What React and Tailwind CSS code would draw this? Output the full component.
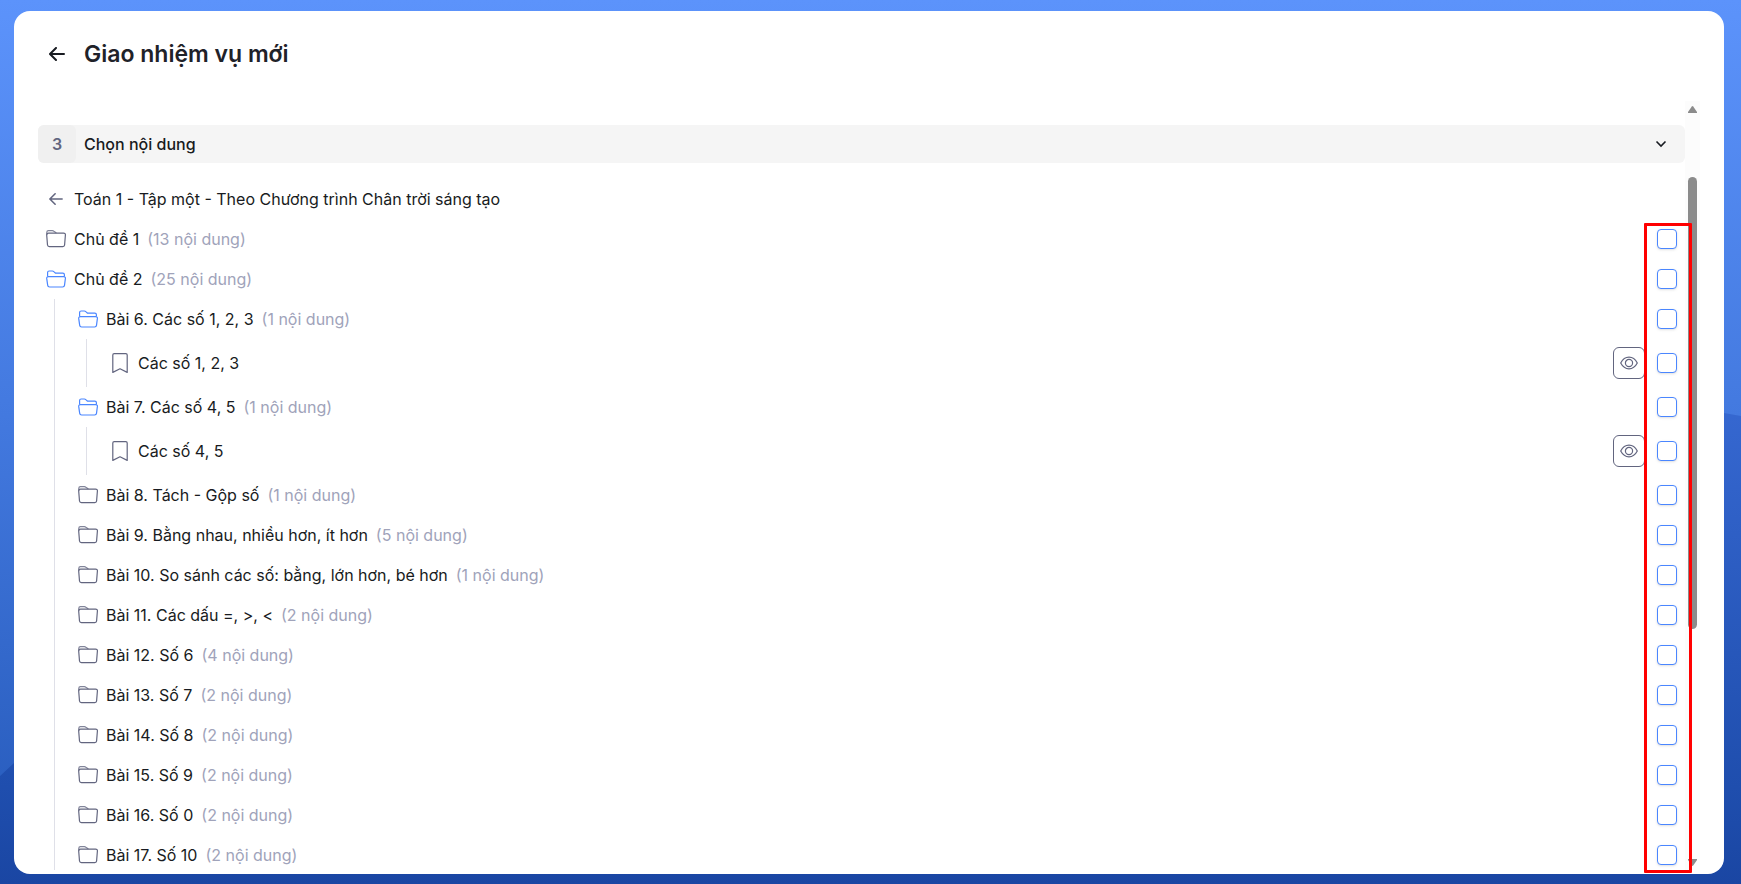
import React, { useState } from 'react';

const treeData = [
    { id: 'cd1', type: 'folder', title: 'Chủ đề 1', count: 13 },
    {
        id: 'cd2',
        type: 'folder',
        title: 'Chủ đề 2',
        count: 25,
        children: [
            {
                id: 'b6',
                type: 'folder',
                title: 'Bài 6. Các số 1, 2, 3',
                count: 1,
                children: [{ id: 'b6-1', type: 'lesson', title: 'Các số 1, 2, 3' }],
            },
            {
                id: 'b7',
                type: 'folder',
                title: 'Bài 7. Các số 4, 5',
                count: 1,
                children: [{ id: 'b7-1', type: 'lesson', title: 'Các số 4, 5' }],
            },
            { id: 'b8', type: 'folder', title: 'Bài 8. Tách - Gộp số', count: 1 },
            { id: 'b9', type: 'folder', title: 'Bài 9. Bằng nhau, nhiều hơn, ít hơn', count: 5 },
            { id: 'b10', type: 'folder', title: 'Bài 10. So sánh các số: bằng, lớn hơn, bé hơn', count: 1 },
            { id: 'b11', type: 'folder', title: 'Bài 11. Các dấu =, >, <', count: 2 },
            { id: 'b12', type: 'folder', title: 'Bài 12. Số 6', count: 4 },
            { id: 'b13', type: 'folder', title: 'Bài 13. Số 7', count: 2 },
            { id: 'b14', type: 'folder', title: 'Bài 14. Số 8', count: 2 },
            { id: 'b15', type: 'folder', title: 'Bài 15. Số 9', count: 2 },
            { id: 'b16', type: 'folder', title: 'Bài 16. Số 0', count: 2 },
            { id: 'b17', type: 'folder', title: 'Bài 17. Số 10', count: 2 },
        ],
    },
];

const ArrowLeftIcon = ({ className }) => (
    <svg viewBox="0 0 16 14" className={className} fill="none" stroke="currentColor" strokeLinecap="round" strokeLinejoin="round">
        <path d="M15 7H1.2M7 1L1 7l6 6" />
    </svg>
);

const FolderIcon = () => (
    <svg viewBox="0 0 20 18" className="h-[18px] w-5 text-[#62657f]" fill="none" stroke="currentColor" strokeWidth="1.2" strokeLinejoin="round">
        <path d="M.8 5V2.2Q.9.7 2.4.7H6.4Q7.2.7 7.9 1.2L10.4 2.9" strokeOpacity=".8" />
        <path d="M2.6 3.2H17.6Q19.5 3.2 19.4 5L18.6 15Q18.5 16.6 16.8 16.6H3.4Q1.7 16.6 1.5 15L.7 5Q.7 3.2 2.6 3.2Z" />
    </svg>
);

const FolderOpenIcon = () => (
    <svg viewBox="0 0 20 18" className="h-[18px] w-5 text-[#4a86ff]" fill="none" stroke="currentColor" strokeWidth="1.2" strokeLinejoin="round">
        <path d="M1.6 6.6V2.6Q1.6 1 3.2 1H6.4Q7.2 1 7.8 1.6L9.6 3.2H16.8Q18.4 3.2 18.4 4.8V6.6" />
        <path d="M2.4 6.6H17.6Q19.5 6.6 19.4 8.4L18.5 15.4Q18.3 17 16.6 17H3.6Q1.9 17 1.7 15.4L.7 8.4Q.6 6.6 2.4 6.6Z" />
    </svg>
);

const BookmarkIcon = () => (
    <svg viewBox="0 0 16 20" className="h-5 w-4 text-[#62657f]" fill="none" stroke="currentColor" strokeWidth="1.2" strokeLinejoin="round">
        <path d="M.8 19.4V2Q.8.6 2.2.6H13.8Q15.2.6 15.2 2V19.4L8 15.8Z" />
    </svg>
);

const EyeIcon = () => (
    <svg viewBox="0 0 18 14" className="h-[14px] w-[18px]" fill="none" stroke="currentColor" strokeWidth="1.2" strokeLinejoin="round">
        <path d="M.7 7C2.6 3.4 5.6 1.2 9 1.2S15.4 3.4 17.3 7C15.4 10.6 12.4 12.8 9 12.8S2.6 10.6.7 7Z" />
        <circle cx="9" cy="7" r="3.6" />
    </svg>
);

const TreeNode = ({ node, checked, onCheck }) => {
    const isLesson = node.type === 'lesson';
    const isOpen = Boolean(node.children);

    return (
        <li>
            <div className={`flex items-center pl-2 pr-2 ${isLesson ? 'h-12' : 'h-10'}`}>
                <span className="mr-2 flex w-5 shrink-0 justify-center">
                    {isLesson ? <BookmarkIcon /> : isOpen ? <FolderOpenIcon /> : <FolderIcon />}
                </span>
                <label htmlFor={node.id} className="flex-1">
                    {node.title}
                    {node.count && <span className="ml-2 text-[#a0a3ba]">({node.count} nội dung)</span>}
                </label>
                {isLesson && (
                    <button
                        type="button"
                        aria-label={`Xem ${node.title}`}
                        className="mr-3 flex size-8 items-center justify-center rounded-md border border-[#62657f] text-[#62657f]"
                    >
                        <EyeIcon />
                    </button>
                )}
                <input
                    id={node.id}
                    type="checkbox"
                    checked={checked.includes(node.id)}
                    onChange={() => onCheck(node.id)}
                    className="size-5 appearance-none rounded border border-[#4a86ff] bg-white shadow-sm checked:bg-[#4a86ff]"
                />
            </div>
            {isOpen && (
                <ul className="ml-4 border-l border-[#dfe0e8] pl-[15px]">
                    {node.children.map((child) => (
                        <TreeNode key={child.id} node={child} checked={checked} onCheck={onCheck} />
                    ))}
                </ul>
            )}
        </li>
    );
};

const Backdrop = () => (
    <svg
        viewBox="0 0 1741 884"
        preserveAspectRatio="none"
        className="absolute inset-0 h-full w-full"
        aria-hidden="true"
    >
        <defs>
            <linearGradient id="sky" x1="0" y1="0" x2="0" y2="1">
                <stop offset="0" stopColor="#5c93fb" />
                <stop offset="0.47" stopColor="#4379df" />
                <stop offset="1" stopColor="#2458b8" />
            </linearGradient>
            <linearGradient id="wave" gradientUnits="userSpaceOnUse" x1="0" y1="400" x2="0" y2="884">
                <stop offset="0" stopColor="#3668d1" />
                <stop offset="0.8" stopColor="#1f4eae" />
                <stop offset="1" stopColor="#1a46a3" />
            </linearGradient>
        </defs>
        <rect width="1741" height="884" fill="url(#sky)" />
        <path d="M0 776L14 763Q700 200 1724 413L1741 416V884H0Z" fill="url(#wave)" />
    </svg>
);

const App = () => {
    const [checked, setChecked] = useState([]);

    const handleCheck = (id) => {
        setChecked(checked.includes(id) ? checked.filter((item) => item !== id) : [...checked, id]);
    };

    return (
        <div className="relative flex h-screen flex-col overflow-hidden pb-[10px] pl-[14px] pr-[17px] pt-[11px] font-['Inter',sans-serif] text-base text-[#181b21]">
            <Backdrop />
            <main className="relative flex min-h-0 flex-1 flex-col rounded-2xl bg-white pb-1 pl-6 pr-6">
                <header className="mb-1 flex h-[86px] shrink-0 items-center pl-[11px]">
                    <button type="button" aria-label="Quay lại" className="mr-[19px] flex w-4 items-center">
                        <ArrowLeftIcon className="h-[14px] w-4 stroke-2" />
                    </button>
                    <h1 className="text-[23px] font-semibold text-[#1f2229]">Giao nhiệm vụ mới</h1>
                </header>

                <div className="flex min-h-0 flex-1">
                    <div className="min-w-0 flex-1 overflow-y-auto pt-6 [scrollbar-width:none]">
                        <button type="button" className="flex h-[38px] w-full items-center rounded-md bg-[#f5f5f5] pr-[18px] text-left font-medium">
                            <span className="mr-2 flex size-[38px] items-center justify-center rounded-md bg-[#f0f0f0] font-semibold text-[#62657f]">
                                3
                            </span>
                            <span className="flex-1">Chọn nội dung</span>
                            <svg viewBox="0 0 12 8" className="h-2 w-3" fill="none" stroke="currentColor" strokeWidth="1.6">
                                <path d="M1.5 1.5L6 6l4.5-4.5" />
                            </svg>
                        </button>

                        <div className="mt-4 flex h-10 items-center pl-2">
                            <button type="button" aria-label="Trở về" className="mr-2 flex w-5 justify-center text-[#62657f]">
                                <ArrowLeftIcon className="h-[14px] w-[14px] stroke-[1.8]" />
                            </button>
                            <span>Toán 1 - Tập một - Theo Chương trình Chân trời sáng tạo</span>
                        </div>

                        <ul>
                            {treeData.map((node) => (
                                <TreeNode key={node.id} node={node} checked={checked} onCheck={handleCheck} />
                            ))}
                        </ul>
                    </div>

                    {/* scrollbar */}
                    <div className="flex w-[15px] shrink-0 flex-col items-center bg-[#fcfcfc] pb-1 pt-[5px] text-[#8b8b8b]">
                        <svg viewBox="0 0 9 7" className="h-[7px] w-[9px]" fill="currentColor">
                            <path d="M3.8.5Q4.5-.3 5.2.5L9 6v1H0V6Z" />
                        </svg>
                        <div className="mb-2 mt-1 w-full flex-1 px-[3px] pt-[60px]">
                            <div className="h-[67%] rounded-full bg-[#8b8b8b]" />
                        </div>
                        <svg viewBox="0 0 9 7" className="h-[7px] w-[9px]" fill="currentColor">
                            <path d="M3.8 6.5Q4.5 7.3 5.2 6.5L9 1V0H0v1Z" />
                        </svg>
                    </div>
                </div>

                {/* highlight around the checkbox column */}
                <div className="pointer-events-none absolute bottom-px right-8 top-[212px] w-12 rounded-[1px] border-[3px] border-[#ff0000]" />
            </main>
        </div>
    );
};

export default App;
